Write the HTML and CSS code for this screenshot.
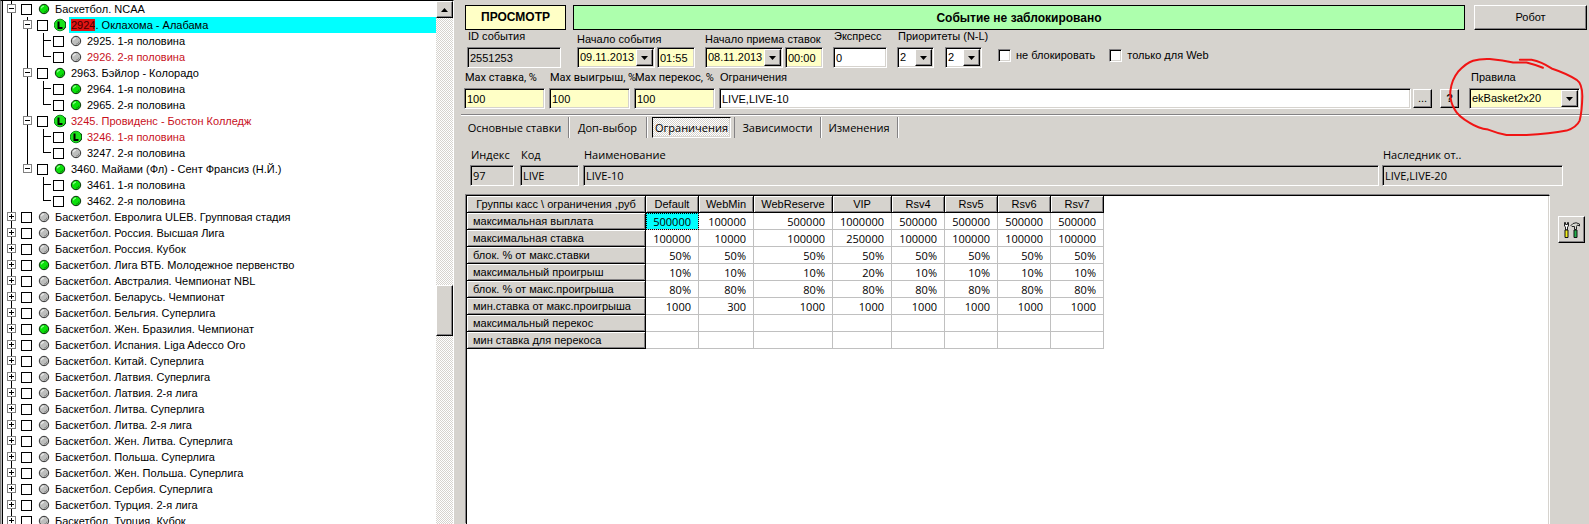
FILE: index.html
```html
<!DOCTYPE html>
<html lang="ru">
<head>
<meta charset="utf-8">
<title>Баскетбол. NCAA</title>
<link rel="stylesheet" href="styles.css">
</head>
<body>
<svg class="defs" aria-hidden="true">
  <symbol id="on" viewBox="0 0 12 12"><circle cx="6" cy="6" r="4.7" fill="#0be00b" stroke="#0a300a"/><path d="M3.4 5.4A2.6 2.6 0 0 1 6 3.2" fill="none" stroke="#8f8" stroke-width="1.2"/><path d="M9 6.5A3 3 0 0 1 6 9.2" fill="none" stroke="#089008"/></symbol>
  <symbol id="off" viewBox="0 0 12 12"><circle cx="6" cy="6" r="4.7" fill="#bdbebd" stroke="#333"/><path d="M3.4 5.4A2.6 2.6 0 0 1 6 3.2" fill="none" stroke="#e8e8e8" stroke-width="1.2"/><path d="M9 6.5A3 3 0 0 1 6 9.2" fill="none" stroke="#8a8a8a"/></symbol>
  <symbol id="live" viewBox="0 0 12 14"><circle cx="6" cy="7" r="5.8" fill="#1be31b" stroke="#0b8a1b"/><path d="M11 3.5a6 6 0 0 1-2 8.500" fill="none" stroke="#053a08"/><path d="M4.500 3.500v6.500h4" fill="none" stroke="#000" stroke-width="2"/></symbol>
  <symbol id="down" viewBox="0 0 7 4"><path d="M0 0h7L3.500 4z"/></symbol>
</svg>
<div class="app">
<aside class="side">
  <div class="tree">
    <div class="row"><i class="guide line"><button class="box" aria-label="Свернуть"></button></i><label><input type="checkbox"><svg class="dot"><use href="#on"/></svg><span>Баскетбол. NCAA</span></label></div>
    <div class="row"><i class="guide line"></i><i class="guide line"><button class="box" aria-label="Свернуть"></button></i><label class="picked"><input type="checkbox"><svg class="dot live"><use href="#live"/></svg><span><mark>2924</mark>. Оклахома - Алабама</span></label></div>
    <div class="row"><i class="guide line"></i><i class="guide line"></i><i class="guide line tee"></i><label><input type="checkbox"><svg class="dot"><use href="#off"/></svg><span>2925. 1-я половина</span></label></div>
    <div class="row"><i class="guide line"></i><i class="guide line"></i><i class="guide half tee"></i><label class="red"><input type="checkbox"><svg class="dot"><use href="#off"/></svg><span>2926. 2-я половина</span></label></div>
    <div class="row"><i class="guide line"></i><i class="guide line"><button class="box" aria-label="Свернуть"></button></i><label><input type="checkbox"><svg class="dot"><use href="#on"/></svg><span>2963. Бэйлор - Колорадо</span></label></div>
    <div class="row"><i class="guide line"></i><i class="guide line"></i><i class="guide line tee"></i><label><input type="checkbox"><svg class="dot"><use href="#on"/></svg><span>2964. 1-я половина</span></label></div>
    <div class="row"><i class="guide line"></i><i class="guide line"></i><i class="guide half tee"></i><label><input type="checkbox"><svg class="dot"><use href="#on"/></svg><span>2965. 2-я половина</span></label></div>
    <div class="row"><i class="guide line"></i><i class="guide line"><button class="box" aria-label="Свернуть"></button></i><label class="red"><input type="checkbox"><svg class="dot live"><use href="#live"/></svg><span>3245. Провиденс - Бостон Колледж</span></label></div>
    <div class="row"><i class="guide line"></i><i class="guide line"></i><i class="guide line tee"></i><label class="red"><input type="checkbox"><svg class="dot live"><use href="#live"/></svg><span>3246. 1-я половина</span></label></div>
    <div class="row"><i class="guide line"></i><i class="guide line"></i><i class="guide half tee"></i><label><input type="checkbox"><svg class="dot"><use href="#off"/></svg><span>3247. 2-я половина</span></label></div>
    <div class="row"><i class="guide line"></i><i class="guide half"><button class="box" aria-label="Свернуть"></button></i><label><input type="checkbox"><svg class="dot"><use href="#on"/></svg><span>3460. Майами (Фл) - Сент Франсиз (Н.Й.)</span></label></div>
    <div class="row"><i class="guide line"></i><i class="guide"></i><i class="guide line tee"></i><label><input type="checkbox"><svg class="dot"><use href="#on"/></svg><span>3461. 1-я половина</span></label></div>
    <div class="row"><i class="guide line"></i><i class="guide"></i><i class="guide half tee"></i><label><input type="checkbox"><svg class="dot"><use href="#on"/></svg><span>3462. 2-я половина</span></label></div>
    <div class="row"><i class="guide line"><button class="box plus" aria-label="Развернуть"></button></i><label><input type="checkbox"><svg class="dot"><use href="#off"/></svg><span>Баскетбол. Евролига ULEB. Групповая стадия</span></label></div>
    <div class="row"><i class="guide line"><button class="box plus" aria-label="Развернуть"></button></i><label><input type="checkbox"><svg class="dot"><use href="#off"/></svg><span>Баскетбол. Россия. Высшая Лига</span></label></div>
    <div class="row"><i class="guide line"><button class="box plus" aria-label="Развернуть"></button></i><label><input type="checkbox"><svg class="dot"><use href="#off"/></svg><span>Баскетбол. Россия. Кубок</span></label></div>
    <div class="row"><i class="guide line"><button class="box plus" aria-label="Развернуть"></button></i><label><input type="checkbox"><svg class="dot"><use href="#on"/></svg><span>Баскетбол. Лига ВТБ. Молодежное первенство</span></label></div>
    <div class="row"><i class="guide line"><button class="box plus" aria-label="Развернуть"></button></i><label><input type="checkbox"><svg class="dot"><use href="#off"/></svg><span>Баскетбол. Австралия. Чемпионат NBL</span></label></div>
    <div class="row"><i class="guide line"><button class="box plus" aria-label="Развернуть"></button></i><label><input type="checkbox"><svg class="dot"><use href="#off"/></svg><span>Баскетбол. Беларусь. Чемпионат</span></label></div>
    <div class="row"><i class="guide line"><button class="box plus" aria-label="Развернуть"></button></i><label><input type="checkbox"><svg class="dot"><use href="#off"/></svg><span>Баскетбол. Бельгия. Суперлига</span></label></div>
    <div class="row"><i class="guide line"><button class="box plus" aria-label="Развернуть"></button></i><label><input type="checkbox"><svg class="dot"><use href="#on"/></svg><span>Баскетбол. Жен. Бразилия. Чемпионат</span></label></div>
    <div class="row"><i class="guide line"><button class="box plus" aria-label="Развернуть"></button></i><label><input type="checkbox"><svg class="dot"><use href="#off"/></svg><span>Баскетбол. Испания. Liga Adecco Oro</span></label></div>
    <div class="row"><i class="guide line"><button class="box plus" aria-label="Развернуть"></button></i><label><input type="checkbox"><svg class="dot"><use href="#off"/></svg><span>Баскетбол. Китай. Суперлига</span></label></div>
    <div class="row"><i class="guide line"><button class="box plus" aria-label="Развернуть"></button></i><label><input type="checkbox"><svg class="dot"><use href="#off"/></svg><span>Баскетбол. Латвия. Суперлига</span></label></div>
    <div class="row"><i class="guide line"><button class="box plus" aria-label="Развернуть"></button></i><label><input type="checkbox"><svg class="dot"><use href="#off"/></svg><span>Баскетбол. Латвия. 2-я лига</span></label></div>
    <div class="row"><i class="guide line"><button class="box plus" aria-label="Развернуть"></button></i><label><input type="checkbox"><svg class="dot"><use href="#off"/></svg><span>Баскетбол. Литва. Суперлига</span></label></div>
    <div class="row"><i class="guide line"><button class="box plus" aria-label="Развернуть"></button></i><label><input type="checkbox"><svg class="dot"><use href="#off"/></svg><span>Баскетбол. Литва. 2-я лига</span></label></div>
    <div class="row"><i class="guide line"><button class="box plus" aria-label="Развернуть"></button></i><label><input type="checkbox"><svg class="dot"><use href="#off"/></svg><span>Баскетбол. Жен. Литва. Суперлига</span></label></div>
    <div class="row"><i class="guide line"><button class="box plus" aria-label="Развернуть"></button></i><label><input type="checkbox"><svg class="dot"><use href="#off"/></svg><span>Баскетбол. Польша. Суперлига</span></label></div>
    <div class="row"><i class="guide line"><button class="box plus" aria-label="Развернуть"></button></i><label><input type="checkbox"><svg class="dot"><use href="#off"/></svg><span>Баскетбол. Жен. Польша. Суперлига</span></label></div>
    <div class="row"><i class="guide line"><button class="box plus" aria-label="Развернуть"></button></i><label><input type="checkbox"><svg class="dot"><use href="#off"/></svg><span>Баскетбол. Сербия. Суперлига</span></label></div>
    <div class="row"><i class="guide line"><button class="box plus" aria-label="Развернуть"></button></i><label><input type="checkbox"><svg class="dot"><use href="#off"/></svg><span>Баскетбол. Турция. 2-я лига</span></label></div>
    <div class="row"><i class="guide line"><button class="box plus" aria-label="Развернуть"></button></i><label><input type="checkbox"><svg class="dot"><use href="#off"/></svg><span>Баскетбол. Турция. Кубок</span></label></div>
  </div>
  <div class="scroll">
    <button class="raised up" aria-label="Вверх"><svg viewBox="0 0 7 4"><path d="M0 4h7L3.500 0z"/></svg></button>
    <div class="before"></div>
    <div class="raised thumb"></div>
    <div class="after"></div>
  </div>
</aside>

<main class="main">
  <div class="top">
    <button class="view">ПРОСМОТР</button>
    <div class="state">Событие не заблокировано</div>
    <button class="raised robot">Робот</button>
  </div>

  <div class="line1">
    <div class="field id"><label for="id">ID события</label><input id="id" class="sunk gray" value="2551253" readonly></div>
    <div class="field low"><label for="d1">Начало события</label>
      <div class="pair"><span class="combo date"><select id="d1" class="sunk yellow"><option>09.11.2013</option></select><i class="raised"><svg><use href="#down"/></svg></i></span><input class="sunk yellow time" aria-label="Время начала события" value="01:55"></div></div>
    <div class="field low"><label for="d2">Начало приема ставок</label>
      <div class="pair"><span class="combo date"><select id="d2" class="sunk yellow"><option>08.11.2013</option></select><i class="raised"><svg><use href="#down"/></svg></i></span><input class="sunk yellow time" aria-label="Время начала приема ставок" value="00:00"></div></div>
    <div class="field express"><label for="ex">Экспресс</label><input id="ex" class="sunk" value="0"></div>
    <div class="field prio"><label for="pn">Приоритеты (N-L)</label>
      <div class="pair"><span class="combo"><select id="pn" class="sunk"><option>2</option></select><i class="raised"><svg><use href="#down"/></svg></i></span><span class="combo"><select class="sunk" aria-label="Приоритет L"><option>2</option></select><i class="raised"><svg><use href="#down"/></svg></i></span></div></div>
    <label class="check"><input type="checkbox" class="sunk">не блокировать</label>
    <label class="check"><input type="checkbox" class="sunk">только для Web</label>
  </div>

  <div class="line2">
    <div class="field pct"><label for="m1">Max ставка, %</label><input id="m1" class="sunk yellow" value="100"></div>
    <div class="field pct"><label for="m2">Max выигрыш, %</label><input id="m2" class="sunk yellow" value="100"></div>
    <div class="field pct"><label for="m3">Max перекос, %</label><input id="m3" class="sunk yellow" value="100"></div>
    <div class="field limits"><label for="lim">Ограничения</label><input id="lim" class="sunk" value="LIVE,LIVE-10"></div>
    <button class="raised small">...</button>
    <button class="raised small help">?</button>
    <div class="field rules"><label for="rules">Правила</label>
      <span class="combo"><select id="rules" class="sunk yellow"><option>ekBasket2x20</option></select><i class="raised"><svg><use href="#down"/></svg></i></span>
      <svg class="ring" viewBox="625 165 410 245" aria-hidden="true"><path d="M840 176L875 176Q905 182 935 202Q980 217 1010 236Q1027 248 1027 285Q1026 330 1019 358Q1010 378 980 388Q930 398 860 401L800 401Q770 395 745 385Q715 381 690 365Q655 345 645 325Q630 300 632 270Q636 235 655 212Q680 185 700 179Q720 173 750 174Q790 178 820 184L860 184Q885 190 909 200"/></svg>
    </div>
  </div>

  <nav class="tabs">
    <button>Основные ставки</button>
    <button>Доп-выбор</button>
    <button class="active">Ограничения</button>
    <button>Зависимости</button>
    <button>Изменения</button>
  </nav>

  <div class="line3">
    <div class="field idx"><label for="i1">Индекс</label><input id="i1" class="sunk gray" value="97" readonly></div>
    <div class="field code"><label for="i2">Код</label><input id="i2" class="sunk gray" value="LIVE" readonly></div>
    <div class="field name"><label for="i3">Наименование</label><input id="i3" class="sunk gray" value="LIVE-10" readonly></div>
    <div class="field heir"><label for="i4">Наследник от..</label><input id="i4" class="sunk gray" value="LIVE,LIVE-20" readonly></div>
  </div>

  <div class="work">
    <div class="sheet">
      <table>
        <colgroup><col class="c-name"><col class="c-n"><col class="c-min"><col class="c-res"><col class="c-vip"><col class="c-n"><col class="c-n"><col class="c-n"><col class="c-n"></colgroup>
        <thead><tr><th>Группы касс \ ограничения ,руб</th><th>Default</th><th>WebMin</th><th>WebReserve</th><th>VIP</th><th>Rsv4</th><th>Rsv5</th><th>Rsv6</th><th>Rsv7</th></tr></thead>
        <tbody>
        <tr><th>максимальная выплата</th><td class="cur">500000</td><td>100000</td><td>500000</td><td>1000000</td><td>500000</td><td>500000</td><td>500000</td><td>500000</td></tr>
        <tr><th>максимальная ставка</th><td>100000</td><td>10000</td><td>100000</td><td>250000</td><td>100000</td><td>100000</td><td>100000</td><td>100000</td></tr>
        <tr><th>блок. % от макс.ставки</th><td>50%</td><td>50%</td><td>50%</td><td>50%</td><td>50%</td><td>50%</td><td>50%</td><td>50%</td></tr>
        <tr><th>максимальный проигрыш</th><td>10%</td><td>10%</td><td>10%</td><td>20%</td><td>10%</td><td>10%</td><td>10%</td><td>10%</td></tr>
        <tr><th>блок. % от макс.проигрыша</th><td>80%</td><td>80%</td><td>80%</td><td>80%</td><td>80%</td><td>80%</td><td>80%</td><td>80%</td></tr>
        <tr><th>мин.ставка от макс.проигрыша</th><td>1000</td><td>300</td><td>1000</td><td>1000</td><td>1000</td><td>1000</td><td>1000</td><td>1000</td></tr>
        <tr><th>максимальный перекос</th><td></td><td></td><td></td><td></td><td></td><td></td><td></td><td></td></tr>
        <tr><th>мин ставка для перекоса</th><td></td><td></td><td></td><td></td><td></td><td></td><td></td><td></td></tr>
        </tbody>
      </table>
    </div>
    <button class="raised tools" aria-label="Настройки"><svg viewBox="0 0 16 16"><path d="M.5 4V.5h1v2h2v-2h1V4l-1 1v3h-2V5z" fill="#fff" stroke="#222"/><path d="M1 8h3v7.500H1z" fill="#f4f01c" stroke="#111"/><path d="M7 3.500L9 1.500Q12-.2 15.500 2v2l-2-1-1 1.500v3h-2v-3L8 4.500z" fill="#d8d8d0" stroke="#222"/><path d="M10 8h3v7.500h-3z" fill="#22b04a" stroke="#111"/></svg></button>
  </div>
</main>
</div>
</body>
</html>
```
FILE: styles.css
```css
:root {
  --face: #d6d3ce;
  --shade: #848284;
  --yellow: #ffffc6;
}
* { box-sizing: border-box; }
body {
  margin: 0;
  background: var(--face);
  color: #000;
  font: 11px/13px "Liberation Sans", Arial, sans-serif;
}
input, select, button { font: inherit; color: inherit; margin: 0; border-radius: 0; }
label, button { white-space: nowrap; }
.defs { position: absolute; width: 0; height: 0; }
.app { display: flex; height: 100vh; overflow: hidden; }

.raised {
  background: var(--face);
  border: 1px solid;
  border-color: #fff #000 #000 #fff;
  box-shadow: inset -1px -1px var(--shade);
  padding: 0;
}
.sunk {
  appearance: none;
  outline: 0;
  height: 21px;
  width: 100%;
  min-width: 0;
  padding: 0 2px;
  background: #fff;
  border: 1px solid;
  border-color: var(--shade) #fff #fff var(--shade);
  box-shadow: inset 1px 1px #000, inset -1px -1px var(--face);
}
.yellow { background: var(--yellow); }
.gray { background: var(--face); }

/* Event tree */
.side {
  flex: none;
  width: 454px;
  display: flex;
  background: #fff;
  border: 1px solid #000;
  border-width: 1px 1px 0 1px;
  border-left-color: #808080;
  border-right-color: #fff;
  box-shadow: inset 1px 0 #c0c0c0, inset 2px 0 #000;
  overflow: hidden;
}
.tree { flex: 1; min-width: 0; padding-left: 3px; }
.row { display: flex; height: 16px; }
.guide {
  flex: none;
  width: 16px;
  height: 16px;
  padding: 3px 0 0 3px;
  background-repeat: no-repeat;
}
.line { background-image: linear-gradient(#000, #000); background-size: 1px 16px; background-position: 7px 0; }
.half { background-image: linear-gradient(#000, #000); background-size: 1px 8px; background-position: 7px 0; }
.line.tee, .half.tee { background-image: linear-gradient(#000, #000), linear-gradient(#000, #000); background-position: 7px 0, 7px 7px; }
.line.tee { background-size: 1px 16px, 8px 1px; }
.half.tee { background-size: 1px 8px, 8px 1px; }
.box {
  display: block;
  width: 9px;
  height: 9px;
  padding: 0;
  border: 1px solid #808080;
  background: linear-gradient(#000, #000) 1px 3px / 5px 1px no-repeat, #fff;
}
.box.plus {
  background: linear-gradient(#000, #000) 1px 3px / 5px 1px no-repeat, linear-gradient(#000, #000) 3px 1px / 1px 5px no-repeat, #fff;
}
.row label { flex: 1; display: flex; align-items: center; line-height: 16px; }
.row input {
  appearance: none;
  flex: none;
  width: 11px;
  height: 11px;
  margin: 0 6px 0 1px;
  border: 1px solid #000;
  background: #fff;
}
.dot { flex: none; width: 12px; height: 12px; margin-right: 3px; }
.dot.live { height: 14px; }
.row span { flex: 1; padding-left: 2px; }
.red { color: #c8101c; }
.picked span { background: #0ff; }
mark { background: #e01414; color: #400; }

.scroll {
  width: 17px;
  display: flex;
  flex-direction: column;
  background: repeating-conic-gradient(#d6d3ce 0 25%, #fff 0 50%) 0 0 / 2px 2px;
}
.up { height: 17px; display: grid; place-items: center; }
.up svg { width: 7px; height: 4px; }
.before { flex: 267; }
.thumb { height: 51px; }
.after { flex: 188; }

/* Event panel */
.main { flex: 1; min-width: 0; display: flex; flex-direction: column; padding-top: 5px; }
.top { display: flex; padding: 0 2px 0 11px; height: 25px; }
.view {
  width: 101px;
  border: 1px solid #000;
  background: var(--yellow);
  font-size: 12px;
  font-weight: bold;
}
.state {
  flex: 1;
  margin: 0 9px 0 7px;
  border: 1px solid #000;
  background: #adffad;
  font-size: 12px;
  font-weight: bold;
  line-height: 25px;
  text-align: center;
}
.robot { width: 113px; }

.field { display: flex; flex-direction: column; gap: 4px; }
.field > label { padding-left: 1px; }
.field.low { gap: 1px; }
.pair { display: flex; gap: 2px; }
.combo { display: grid; width: 37px; }
.combo > * { grid-area: 1 / 1; }
.combo i {
  justify-self: end;
  width: 17px;
  height: 17px;
  margin: 2px;
  display: grid;
  place-items: center;
  pointer-events: none;
}
.combo svg { width: 7px; height: 4px; }
.date { width: 78px; }
.time { width: 38px; }

.line1 { display: flex; align-items: flex-end; padding: 0 13px; height: 38px; }
.id { width: 94px; margin-right: 16px; }
.low { width: 119px; margin-right: 9px; }
.low > label { padding-left: 0; }
.express { width: 54px; margin-right: 10px; }
.prio { width: 85px; margin-right: 16px; }
.prio .pair { gap: 11px; }
.check { display: flex; align-items: center; gap: 5px; height: 13px; margin: 0 14px 6px 0; }
.check input { width: 13px; height: 13px; }

.line2 { display: flex; align-items: flex-end; padding: 0 9px 0 10px; height: 41px; }
.pct { width: 81px; margin-right: 4px; }
.pct > label { font-family: Roboto, "Liberation Sans", sans-serif; }
.limits { flex: 1; min-width: 0; margin-right: 2px; }
.small { width: 19px; height: 19px; margin: 0 8px 1px 0; }
.help { margin-right: 10px; font-weight: bold; }
.rules { width: 111px; position: relative; }
.rules > label { padding-left: 2px; }
.rules .combo { width: 100%; }
.ring {
  position: absolute;
  left: -21px;
  top: -15px;
  width: 137px;
  height: 82px;
  pointer-events: none;
}
.ring path { fill: none; stroke: #f01414; stroke-width: 6; stroke-linecap: round; stroke-linejoin: round; }

.tabs {
  display: flex;
  margin: 5px 0 0 7px;
  border-top: 1px solid var(--shade);
  box-shadow: inset 0 1px #fff;
  padding-top: 2px;
  height: 24px;
}
.tabs button {
  background: none;
  border: 0;
  border-right: 1px solid var(--shade);
  box-shadow: 1px 0 #fff;
  padding: 0;
  width: 86px;
}
.tabs button, .line3, .sheet td { font-family: "Open Sans", "Liberation Sans", sans-serif; }
.tabs button:first-child { width: 108px; }
.tabs button:nth-child(2) { width: 78px; }
.tabs button:nth-child(5) { width: 77px; }
.tabs .active {
  width: 79px;
  margin: 0 4px 0 5px;
  border: 1px solid;
  border-color: #000 #fff #fff #000;
  background: repeating-conic-gradient(#d6d3ce 0 25%, #fff 0 50%) 0 0 / 2px 2px;
  box-shadow: inset -1px -1px var(--face), 3px 0 var(--face), 4px 0 var(--shade);
}

.line3 { display: flex; padding: 10px 26px 0 16px; }
.idx { width: 44px; margin-right: 6px; }
.code { width: 59px; margin-right: 4px; }
.name { flex: 1; margin-right: 3px; }
.heir { width: 181px; }

.work { flex: 1; display: flex; align-items: flex-start; margin-top: 9px; padding: 0 4px 0 12px; }
.sheet {
  flex: 1;
  align-self: stretch;
  background: #fff;
  border: 1px solid #000;
  border-bottom: 0;
  border-right-color: #fff;
  box-shadow: -1px -1px var(--shade), inset -1px 0 var(--face);
}
.tools { width: 27px; height: 27px; margin: 21px 0 0 8px; display: grid; place-items: center; }
.tools svg { width: 16px; height: 16px; }
table { width: 637px; table-layout: fixed; border-collapse: separate; border-spacing: 0; }
.c-name { width: 179px; }
.c-n { width: 53px; }
.c-min { width: 55px; }
.c-res { width: 79px; }
.c-vip { width: 59px; }
th, td { height: 17px; padding: 0; line-height: 15px; white-space: nowrap; }
th {
  font-weight: normal;
  background: var(--face);
  border: 1px solid #000;
  border-width: 0 1px 1px 0;
  box-shadow: inset 1px 1px #fff, inset -1px -1px var(--shade);
}
tbody th { text-align: left; padding-left: 6px; }
td {
  text-align: right;
  padding-right: 7px;
  border: 1px solid #c0c0c0;
  border-width: 0 1px 1px 0;
}
td.cur { background: #0ff; outline: 1px dotted #000; outline-offset: -1px; }
```
